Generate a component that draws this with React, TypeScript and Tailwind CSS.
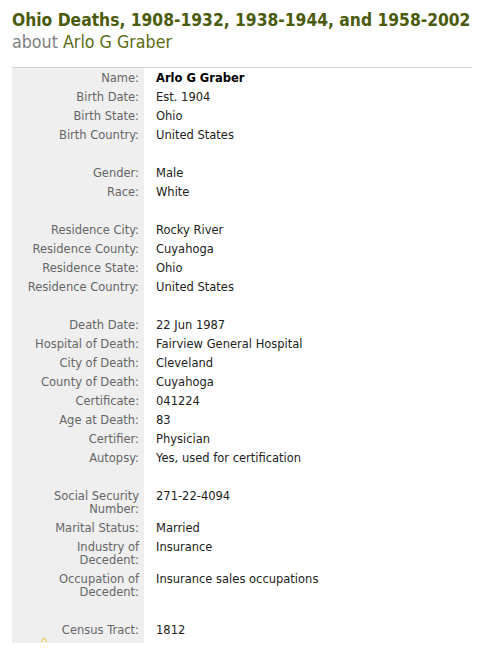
import React from 'react';

type Row = { label: string; value: string; bold?: boolean };

const groups: Row[][] = [
  [
    { label: 'Name:', value: 'Arlo G Graber', bold: true },
    { label: 'Birth Date:', value: 'Est. 1904' },
    { label: 'Birth State:', value: 'Ohio' },
    { label: 'Birth Country:', value: 'United States' },
  ],
  [
    { label: 'Gender:', value: 'Male' },
    { label: 'Race:', value: 'White' },
  ],
  [
    { label: 'Residence City:', value: 'Rocky River' },
    { label: 'Residence County:', value: 'Cuyahoga' },
    { label: 'Residence State:', value: 'Ohio' },
    { label: 'Residence Country:', value: 'United States' },
  ],
  [
    { label: 'Death Date:', value: '22 Jun 1987' },
    { label: 'Hospital of Death:', value: 'Fairview General Hospital' },
    { label: 'City of Death:', value: 'Cleveland' },
    { label: 'County of Death:', value: 'Cuyahoga' },
    { label: 'Certificate:', value: '041224' },
    { label: 'Age at Death:', value: '83' },
    { label: 'Certifier:', value: 'Physician' },
    { label: 'Autopsy:', value: 'Yes, used for certification' },
  ],
  [
    { label: 'Social Security Number:', value: '271-22-4094' },
    { label: 'Marital Status:', value: 'Married' },
    { label: 'Industry of Decedent:', value: 'Insurance' },
    { label: 'Occupation of Decedent:', value: 'Insurance sales occupations' },
  ],
  [{ label: 'Census Tract:', value: '1812' }],
];

const RecordRow = ({ row }: { row: Row }) => (
  <div className="flex">
    <div className="w-[132px] shrink-0 bg-[#efefef] pr-[5px] pl-3 pt-[4px] pb-[2px] text-right leading-[13px] text-[#666]">
      {row.label}
    </div>
    <div className={`pl-3 pt-[4px] pb-[2px] leading-[13px] text-[#222] ${row.bold ? 'font-bold text-black' : ''}`}>
      {row.value}
    </div>
  </div>
);

const Spacer = () => (
  <div className="flex h-[19px]">
    <div className="w-[132px] shrink-0 bg-[#efefef]" />
  </div>
);

export default function App() {
  return (
    <div className="min-h-[652px] w-[488px] overflow-hidden bg-white px-3 pt-[9px] font-['DejaVu_Sans',sans-serif]">
      <h1 className="whitespace-nowrap font-['DejaVu_Sans_Condensed','DejaVu_Sans',sans-serif] text-[17.3px] font-bold leading-[22px] text-[#4b5b0c]">
        Ohio Deaths, 1908-1932, 1938-1944, and 1958-2002
      </h1>
      <h2 className="font-['DejaVu_Sans_Condensed','DejaVu_Sans',sans-serif] text-[17.7px] leading-[22px] text-[#808080]">
        about <span className="text-[#5a6b14]">Arlo G Graber</span>
      </h2>

      <div className="mt-[14px] w-[460px] border-t border-[#d4d4d4] text-[11.5px]">
        {groups.map((group, gi) => (
          <React.Fragment key={gi}>
            {gi > 0 && <Spacer />}
            {group.map((row) => (
              <RecordRow key={row.label} row={row} />
            ))}
          </React.Fragment>
        ))}
        <div className="relative flex h-[4px]">
          <div className="w-[132px] shrink-0 bg-[#efefef]" />
          <svg className="absolute left-[28px] top-[-2px]" width="8" height="6" viewBox="0 0 8 6">
            <path d="M1 5 L4 1 L7 5" fill="none" stroke="#e8d25a" strokeWidth="1.2" />
          </svg>
        </div>
      </div>
    </div>
  );
}
